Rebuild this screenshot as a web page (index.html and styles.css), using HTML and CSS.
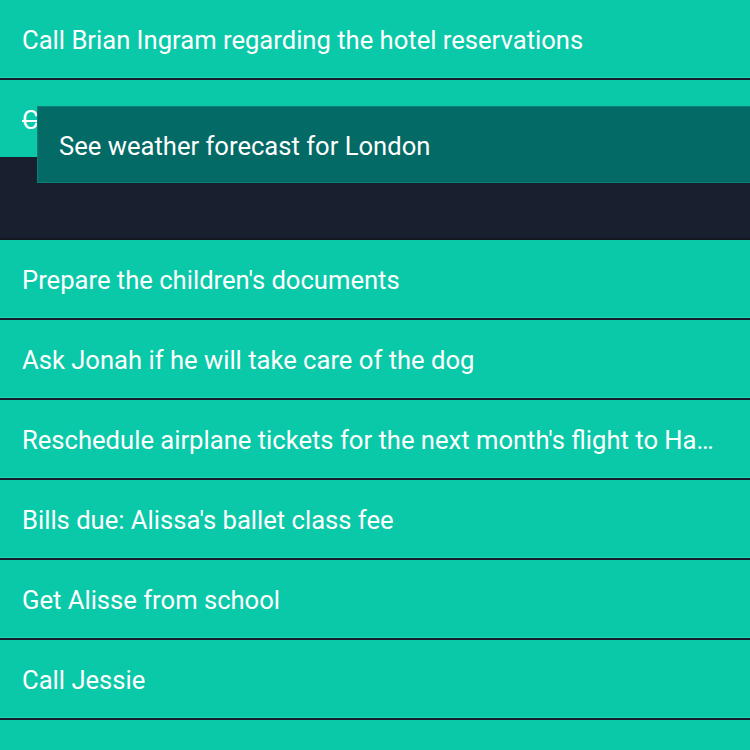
FILE: index.html
```html
<!DOCTYPE html>
<html lang="en">
<head>
<meta charset="utf-8">
<title>Tasks</title>
<link rel="stylesheet" href="styles.css">
</head>
<body>
<div class="board">
  <ul class="tasks">
    <li class="task"><span class="label">Call Brian Ingram regarding the hotel reservations</span></li>
    <li class="task"><span class="label done">Check the car insurance renewal</span></li>
    <li class="task placeholder"></li>
    <li class="task"><span class="label">Prepare the children's documents</span></li>
    <li class="task"><span class="label">Ask Jonah if he will take care of the dog</span></li>
    <li class="task"><span class="label">Reschedule airplane tickets for the next month's flight to Hawaii</span></li>
    <li class="task"><span class="label">Bills due: Alissa's ballet class fee</span></li>
    <li class="task"><span class="label">Get Alisse from school</span></li>
    <li class="task"><span class="label">Call Jessie</span></li>
    <li class="task"></li>
  </ul>
  <div class="dragging"><span class="label">See weather forecast for London</span></div>
</div>
</body>
</html>
```

FILE: styles.css
```css
html, body {
  margin: 0;
  padding: 0;
  background: #0ac9a9;
}
body {
  font-family: Roboto, "Liberation Sans", Arial, sans-serif;
  width: 750px;
  height: 750px;
  overflow: hidden;
}
.board {
  position: relative;
  width: 750px;
  height: 750px;
  overflow: hidden;
}
.tasks {
  list-style: none;
  margin: 0;
  padding: 0;
}
.task {
  box-sizing: border-box;
  height: 80px;
  display: flex;
  align-items: center;
  padding: 2px 26px 0 22px;
  background: #0ac9a9;
  border-bottom: 2px solid #161d2b;
  box-shadow: inset 0 -1px 0 #1fd6b6, 0 1px 0 #1fd6b6;
  color: #ffffff;
  font-size: 25.6px;
}
.task .label {
  white-space: nowrap;
  overflow: hidden;
  text-overflow: ellipsis;
  min-width: 0;
}
.done {
  text-decoration: line-through;
}
.placeholder {
  background: #181f2f;
  border-bottom-color: #11161f;
  box-shadow: none;
  margin-top: -3px;
  height: 83px;
}
.dragging {
  position: absolute;
  left: 37px;
  top: 106px;
  width: 760px;
  height: 77px;
  box-sizing: border-box;
  display: flex;
  align-items: center;
  padding: 2px 0 0 21px;
  background: #036a66;
  border: 1px solid #0b7e77;
  color: #ffffff;
  font-size: 25.6px;
}
```
